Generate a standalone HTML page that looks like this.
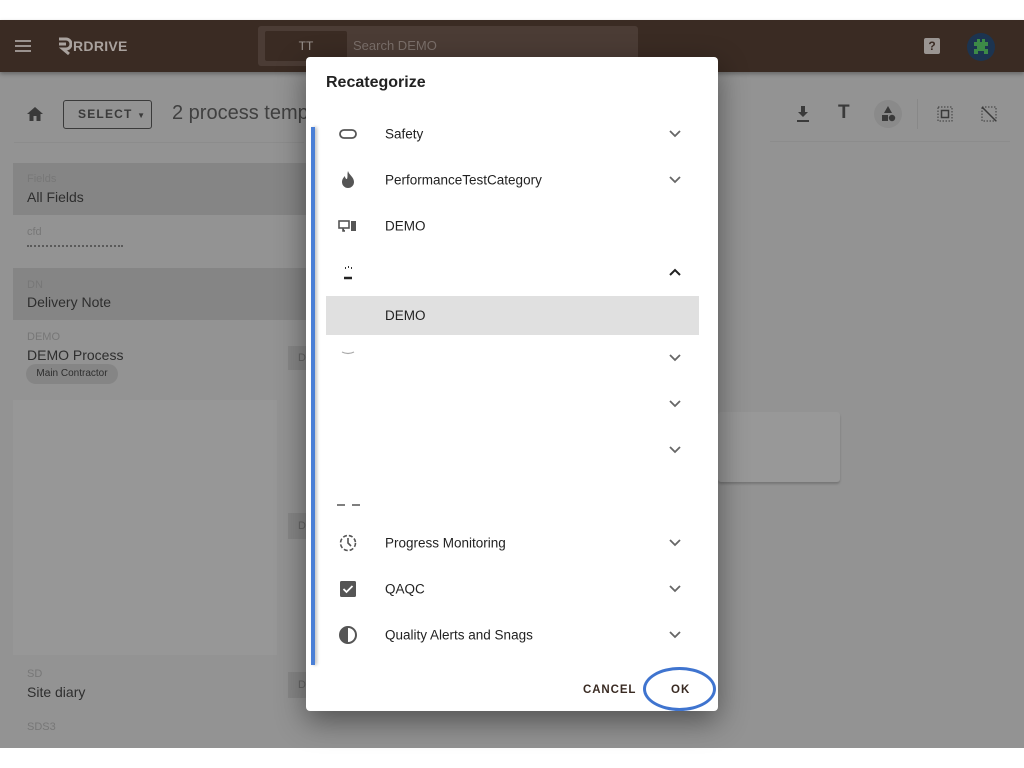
<!DOCTYPE html>
<html><head><meta charset="utf-8"><style>
*{box-sizing:border-box;margin:0;padding:0}
body{width:1024px;height:768px;background:#fff;font-family:"Liberation Sans",sans-serif;position:relative;overflow:hidden}
.abs{position:absolute}
.page{left:0;top:20px;width:1024px;height:728px;background:#939393}
.hdr{left:0;top:20px;width:1024px;height:52px;background:#3a2b23;box-shadow:0 2px 4px rgba(0,0,0,.3)}
.lbl{font-size:11px;color:#777}
.val{font-size:14px;color:#2e2e2e}
.dlg{left:306px;top:57px;width:412px;height:654px;background:#fff;border-radius:4px;box-shadow:0 10px 30px rgba(0,0,0,.45)}
.row{position:absolute;left:0;width:412px;height:46px}
.row .t{position:absolute;left:79px;top:50%;transform:translateY(-50%);font-size:13.5px;color:#222}
.row .ic{position:absolute;left:32px;top:50%;transform:translateY(-50%);width:20px;height:20px}
.chev{position:absolute;left:362px;top:50%;transform:translateY(-50%);width:14px;height:10px}
</style></head><body>
<div class="abs page"></div>
<div class="abs hdr"></div>
<svg class="abs" style="left:15px;top:39px" width="16" height="14"><rect y="1" width="16" height="2" fill="#9a928e"/><rect y="6" width="16" height="2" fill="#9a928e"/><rect y="11" width="16" height="2" fill="#9a928e"/></svg>
<svg class="abs" style="left:56px;top:36px" width="16" height="20"><path d="M3 3h7a5 5 0 0 1 0 10H7l6 5M3 8h7" stroke="#a9a29e" stroke-width="3" fill="none"/></svg>
<div class="abs" style="left:73px;top:38px;font-size:14px;font-weight:bold;color:#a9a29e;letter-spacing:.3px">RDRIVE</div>
<div class="abs" style="left:258px;top:26px;width:380px;height:40px;background:#4b3c35;border-radius:3px"></div>
<div class="abs" style="left:265px;top:31px;width:82px;height:30px;background:#3a2b23;border-radius:2px;color:#9c9591;font-size:12px;text-align:center;line-height:30px">TT</div>
<div class="abs" style="left:353px;top:38px;font-size:13px;color:#7a6f6a">Search DEMO</div>
<div class="abs" style="left:924px;top:38px;width:16px;height:16px;background:#9a9592;border-radius:2px;color:#3a2b23;font-size:12px;font-weight:bold;text-align:center;line-height:16px">?</div>
<div class="abs" style="left:967px;top:33px;width:28px;height:28px;border-radius:50%;background:#1c3450"></div>
<svg class="abs" style="left:970px;top:36px" width="22" height="22"><path d="M7 3h3v3h2V3h3v3h3v4h-3v3h3v5h-4v-3H8v3H4v-5h3v-3H4V6h3z" fill="#3d8a47"/></svg>

<svg class="abs" style="left:26px;top:106px" width="18" height="16"><path d="M9 1 1 8h2.5v7h4v-5h3v5h4V8H17z" fill="#3a3a3a"/></svg>
<div class="abs" style="left:63px;top:100px;width:89px;height:29px;border:1px solid #3a3a3a;border-radius:3px;font-size:12px;font-weight:bold;letter-spacing:1.2px;color:#3a3a3a;line-height:27px;padding-left:14px">SELECT <span style="font-size:8px">▼</span></div>
<div class="abs" style="left:172px;top:102px;font-size:20px;color:#404040">2 process temp</div>
<div class="abs" style="left:14px;top:142px;width:290px;height:1px;background:#8c8c8c"></div>
<svg class="abs" style="left:795px;top:105px" width="16" height="18"><path d="M6 1h4v6h3l-5 5-5-5h3zM2 15h12v2H2z" fill="#3a3a3a"/></svg>
<div class="abs" style="left:838px;top:102px;font-size:19px;font-weight:bold;color:#3a3a3a">T</div>
<div class="abs" style="left:874px;top:100px;width:28px;height:28px;border-radius:50%;background:#8a8a8a"></div>
<svg class="abs" style="left:879px;top:105px" width="18" height="18"><path d="M9 1 13 8H5z" fill="#3a3a3a"/><rect x="3" y="10" width="6" height="6" fill="#3a3a3a"/><circle cx="13" cy="13" r="3.2" fill="#3a3a3a"/></svg>
<div class="abs" style="left:917px;top:99px;width:1px;height:30px;background:#888"></div>
<svg class="abs" style="left:937px;top:106px" width="16" height="16"><rect x="1" y="1" width="14" height="14" fill="none" stroke="#3a3a3a" stroke-dasharray="1.5 1.5"/><rect x="4.5" y="4.5" width="7" height="7" fill="none" stroke="#3a3a3a" stroke-width="1.5"/></svg>
<svg class="abs" style="left:981px;top:106px" width="16" height="16"><rect x="1" y="1" width="14" height="14" fill="none" stroke="#3a3a3a" stroke-dasharray="1.5 1.5"/><path d="M1 1 15 15" stroke="#3a3a3a" stroke-width="1.5"/></svg>
<div class="abs" style="left:770px;top:141px;width:240px;height:1px;background:#8c8c8c"></div>

<div class="abs" style="left:13px;top:163px;width:295px;height:52px;background:#858585"></div>
<div class="abs lbl" style="left:27px;top:173px">Fields</div>
<div class="abs val" style="left:27px;top:189px">All Fields</div>
<div class="abs lbl" style="left:27px;top:226px">cfd</div>
<div class="abs" style="left:27px;top:245px;width:96px;height:5px;border-top:2px dotted #5a5a5a"></div>
<div class="abs" style="left:13px;top:268px;width:295px;height:52px;background:#858585"></div>
<div class="abs lbl" style="left:27px;top:279px">DN</div>
<div class="abs val" style="left:27px;top:294px">Delivery Note</div>
<div class="abs lbl" style="left:27px;top:331px">DEMO</div>
<div class="abs val" style="left:27px;top:347px">DEMO Process</div>
<div class="abs" style="left:26px;top:364px;width:92px;height:20px;border-radius:10px;background:#858585;font-size:10px;color:#2e2e2e;text-align:center;line-height:20px">Main Contractor</div>
<div class="abs" style="left:288px;top:346px;width:20px;height:24px;background:#878787;font-size:11px;color:#666;line-height:24px;padding-left:10px">D</div>
<div class="abs" style="left:13px;top:400px;width:264px;height:255px;background:#979797"></div>
<div class="abs" style="left:288px;top:513px;width:20px;height:26px;background:#878787;font-size:11px;color:#666;line-height:26px;padding-left:10px">D</div>
<div class="abs lbl" style="left:27px;top:668px">SD</div>
<div class="abs val" style="left:27px;top:684px">Site diary</div>
<div class="abs" style="left:288px;top:672px;width:20px;height:26px;background:#878787;font-size:11px;color:#666;line-height:26px;padding-left:10px">D</div>
<div class="abs lbl" style="left:27px;top:721px">SDS3</div>
<div class="abs" style="left:718px;top:412px;width:122px;height:70px;background:#989898;border-radius:3px;box-shadow:0 2px 2px rgba(0,0,0,.2)"></div>

<div class="abs dlg">
  <div class="abs" style="left:20px;top:17px;font-size:16px;color:#222;font-weight:bold">Recategorize</div>
  <div class="abs" style="left:5px;top:70px;width:4px;height:538px;background:#4a7fd6;box-shadow:2px 0 3px rgba(0,0,0,.25)"></div>
  <div class="row" style="top:54px"><svg class="ic" viewBox="0 0 20 20"><rect x="2" y="6" width="16" height="8" rx="4" fill="none" stroke="#555" stroke-width="1.8"/></svg><div class="t">Safety</div><svg class="chev"><path d="M2 2l5 5 5-5" stroke="#666" stroke-width="1.8" fill="none"/></svg></div>
  <div class="row" style="top:100px"><svg class="ic" viewBox="0 0 20 20"><path d="M10 1c1 4 6 6 6 11a6 6 0 0 1-12 0c0-3 2-5 3-6 0 2 1 3 2 3 1-3 0-5 1-8z" fill="#555"/></svg><div class="t">PerformanceTestCategory</div><svg class="chev"><path d="M2 2l5 5 5-5" stroke="#666" stroke-width="1.8" fill="none"/></svg></div>
  <div class="row" style="top:146px"><svg class="ic" viewBox="0 0 20 20"><rect x="1" y="5" width="10" height="7" fill="none" stroke="#555" stroke-width="1.6"/><path d="M5 12v3h2" stroke="#555" stroke-width="1.6"/><rect x="13" y="5" width="5" height="10" fill="#555"/></svg><div class="t">DEMO</div></div>
  <div class="row" style="top:192px"><svg class="ic" viewBox="0 0 20 20"><path d="M7 6h1M10 5h1M13 6h1" stroke="#333" stroke-width="2"/><path d="M6 16h8" stroke="#222" stroke-width="2.5"/></svg><svg class="chev"><path d="M2 8l5-5 5 5" stroke="#222" stroke-width="2" fill="none"/></svg></div>
  <div class="abs" style="left:20px;top:239px;width:373px;height:39px;background:#e0e0e0"></div>
  <div class="abs" style="left:79px;top:251px;font-size:13.5px;color:#222">DEMO</div>
  <div class="row" style="top:278px"><svg class="ic" viewBox="0 0 20 20"><path d="M4 4q6 3 12 0" stroke="#aaa" stroke-width="1.2" fill="none"/></svg><svg class="chev"><path d="M2 2l5 5 5-5" stroke="#666" stroke-width="1.8" fill="none"/></svg></div>
  <div class="row" style="top:324px"><svg class="chev"><path d="M2 2l5 5 5-5" stroke="#666" stroke-width="1.8" fill="none"/></svg></div>
  <div class="row" style="top:370px"><svg class="chev"><path d="M2 2l5 5 5-5" stroke="#666" stroke-width="1.8" fill="none"/></svg></div>
  <svg class="abs" style="left:30px;top:446px" width="26" height="4"><path d="M1 2h8M16 2h8" stroke="#555" stroke-width="1.5"/></svg>
  <div class="row" style="top:463px"><svg class="ic" viewBox="0 0 20 20"><circle cx="10" cy="10" r="7.5" fill="none" stroke="#555" stroke-width="1.6" stroke-dasharray="4 2"/><path d="M10 5v5l3 3" stroke="#555" stroke-width="1.6" fill="none"/></svg><div class="t">Progress Monitoring</div><svg class="chev"><path d="M2 2l5 5 5-5" stroke="#666" stroke-width="1.8" fill="none"/></svg></div>
  <div class="row" style="top:509px"><svg class="ic" viewBox="0 0 20 20"><rect x="2" y="2" width="16" height="16" rx="1.5" fill="#555"/><path d="M5.5 10l3 3 6-6" stroke="#fff" stroke-width="1.8" fill="none"/></svg><div class="t">QAQC</div><svg class="chev"><path d="M2 2l5 5 5-5" stroke="#666" stroke-width="1.8" fill="none"/></svg></div>
  <div class="row" style="top:555px"><svg class="ic" viewBox="0 0 20 20"><circle cx="10" cy="10" r="8" fill="none" stroke="#555" stroke-width="2"/><path d="M10 2a8 8 0 0 0 0 16z" fill="#555"/></svg><div class="t">Quality Alerts and Snags</div><svg class="chev"><path d="M2 2l5 5 5-5" stroke="#666" stroke-width="1.8" fill="none"/></svg></div>
  <div class="abs" style="left:277px;top:627px;font-size:11.5px;font-weight:bold;letter-spacing:0.9px;color:#3a2b23">CANCEL</div>
  <div class="abs" style="left:365px;top:627px;font-size:11.5px;font-weight:bold;letter-spacing:1px;color:#3a2b23">OK</div>
  <div class="abs" style="left:337px;top:610px;width:73px;height:44px;border:3px solid #3f74cf;border-radius:50%"></div>
</div>
</body></html>
